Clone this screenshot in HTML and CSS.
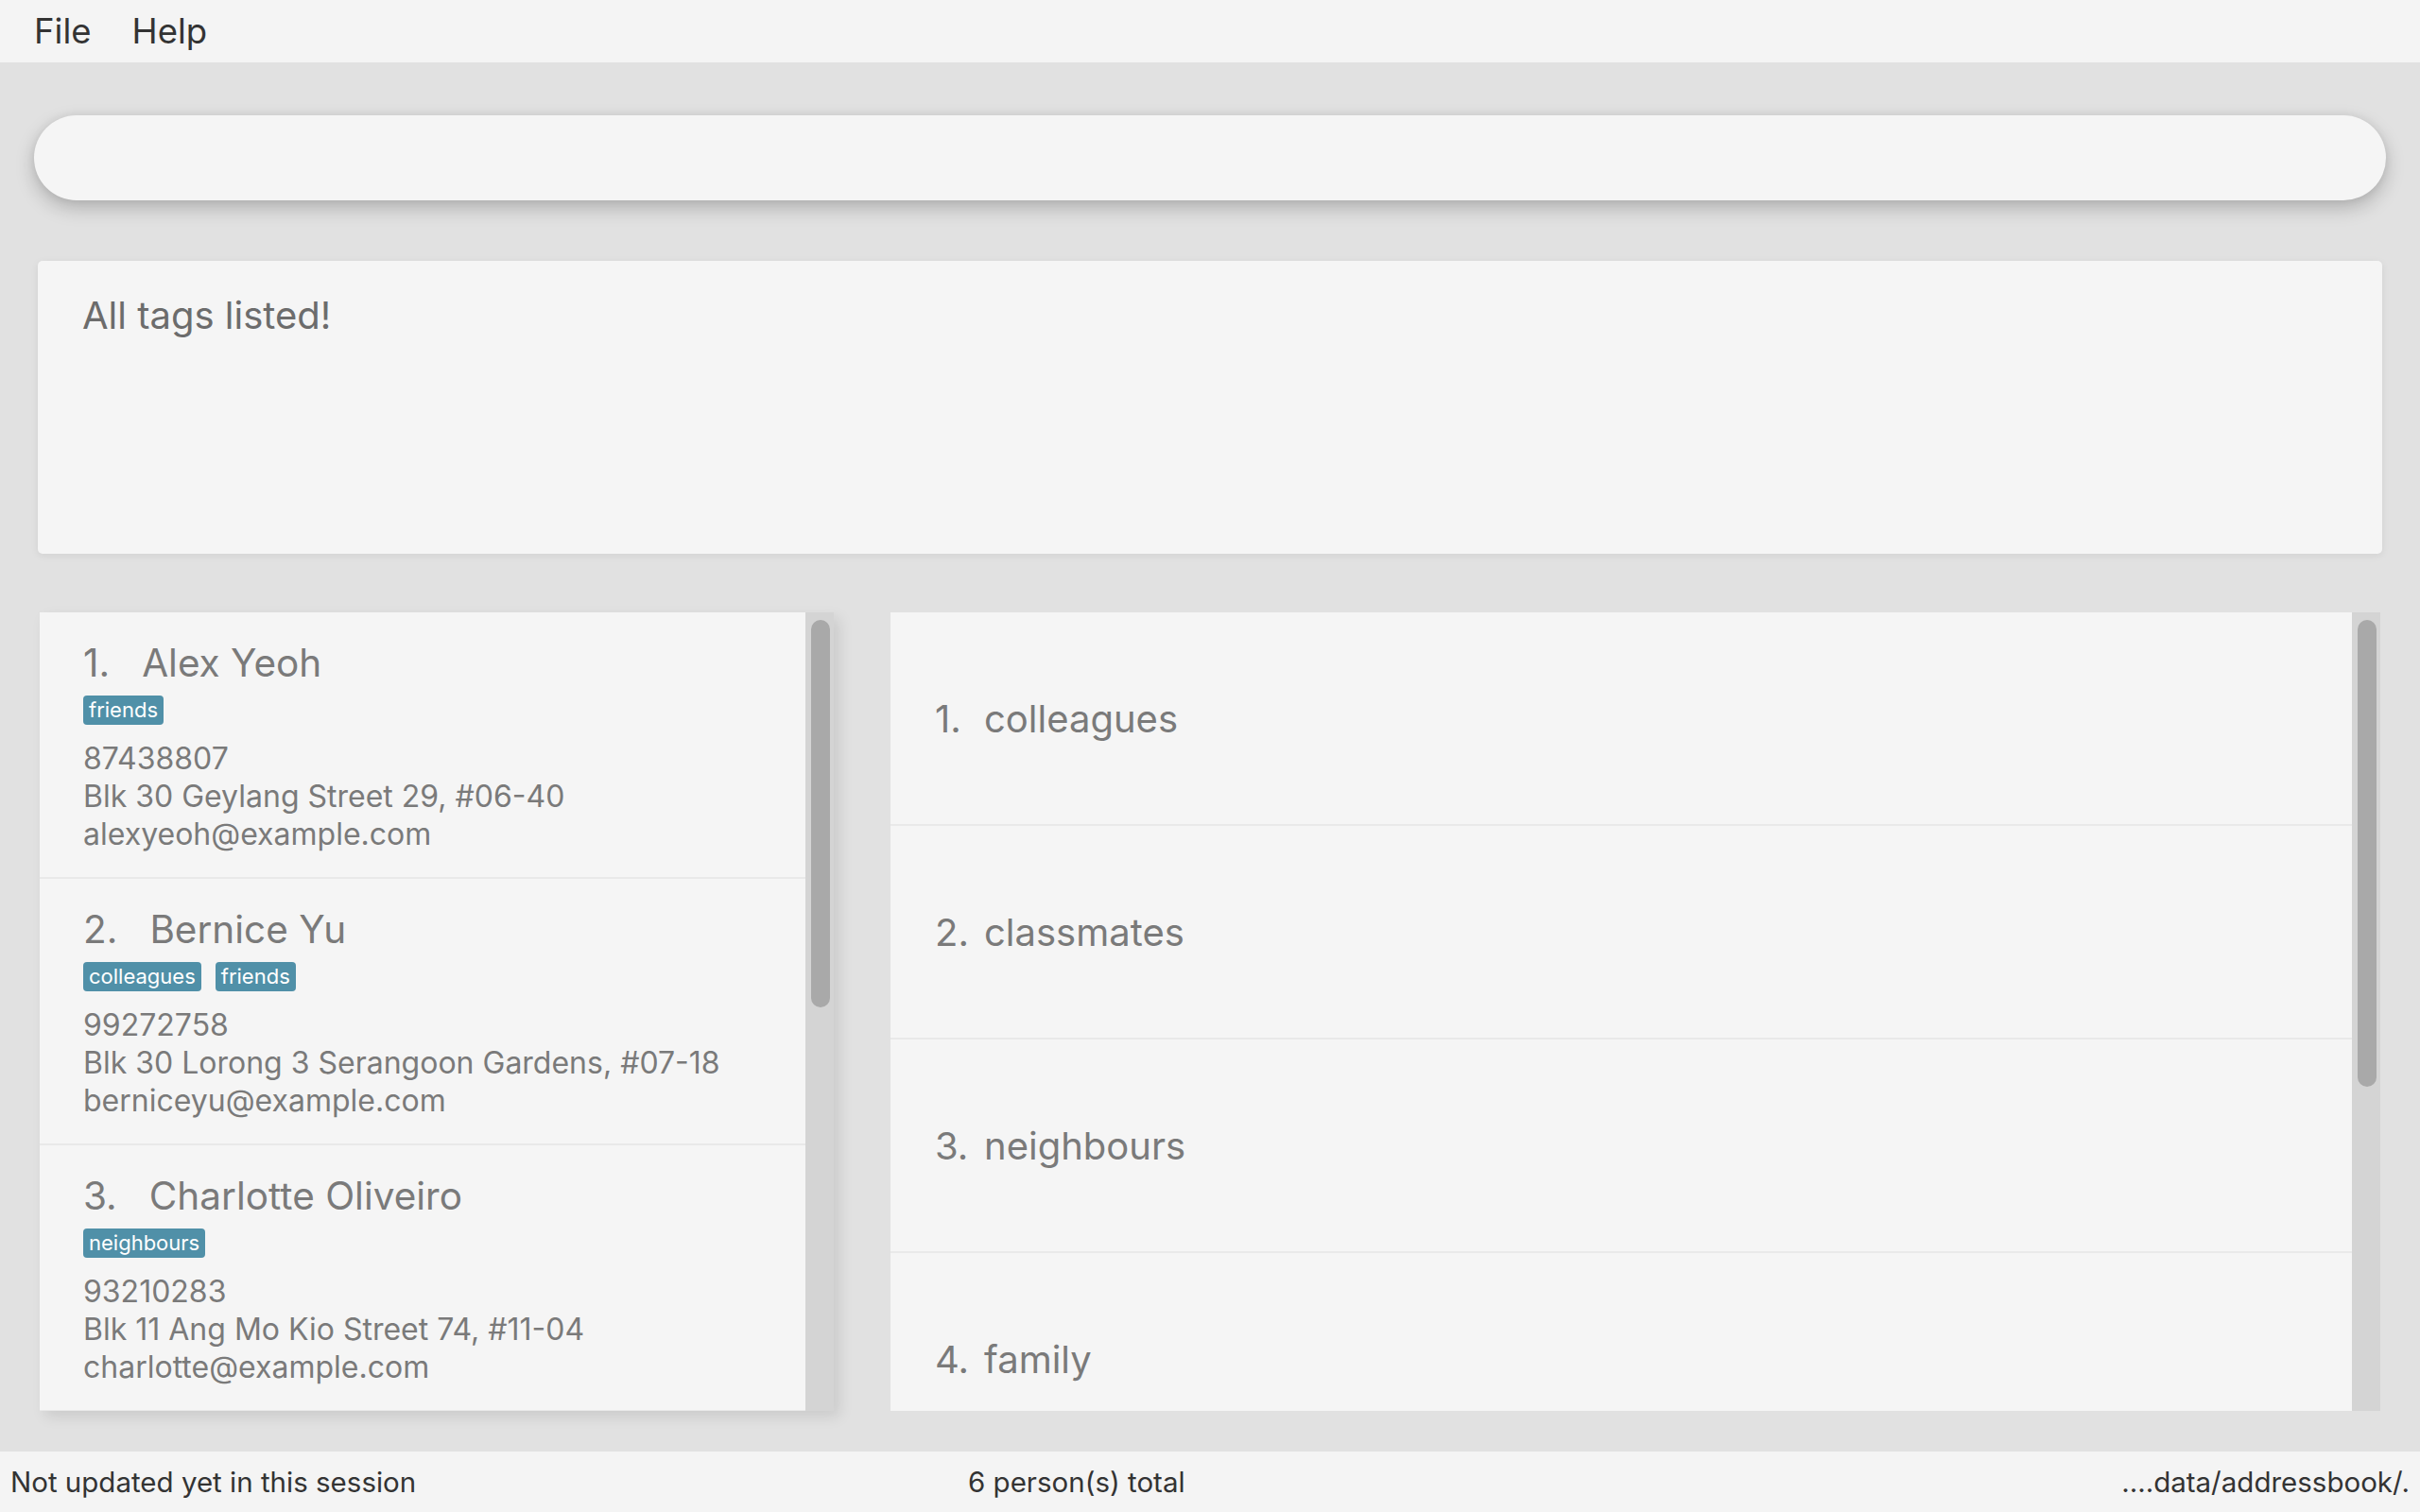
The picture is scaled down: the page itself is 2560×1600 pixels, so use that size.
FILE: index.html
```html
<!DOCTYPE html>
<html>
<head>
<meta charset="utf-8">
<link rel="stylesheet" href="styles.css">
</head>
<body>
<div class="app">
  <div class="menubar">
    <span class="menu-item">File</span>
    <span class="menu-item">Help</span>
  </div>
  <div class="command-box"></div>
  <div class="result-box">All tags listed!</div>
  <div class="panels">
    <div class="person-panel">
      <div class="person-list">
        <div class="card">
          <div class="name"><span class="idx">1.</span>Alex Yeoh</div>
          <div class="tags"><span class="tag">friends</span></div>
          <div class="detail">87438807</div>
          <div class="detail">Blk 30 Geylang Street 29, #06-40</div>
          <div class="detail">alexyeoh@example.com</div>
        </div>
        <div class="card">
          <div class="name"><span class="idx">2.</span>Bernice Yu</div>
          <div class="tags"><span class="tag">colleagues</span><span class="tag">friends</span></div>
          <div class="detail">99272758</div>
          <div class="detail">Blk 30 Lorong 3 Serangoon Gardens, #07-18</div>
          <div class="detail">berniceyu@example.com</div>
        </div>
        <div class="card">
          <div class="name"><span class="idx">3.</span>Charlotte Oliveiro</div>
          <div class="tags"><span class="tag">neighbours</span></div>
          <div class="detail">93210283</div>
          <div class="detail">Blk 11 Ang Mo Kio Street 74, #11-04</div>
          <div class="detail">charlotte@example.com</div>
        </div>
      </div>
      <div class="track track-person"><div class="thumb thumb-person"></div></div>
    </div>
    <div class="tag-panel">
      <div class="tag-list">
        <div class="tag-row"><span class="tidx">1.</span>colleagues</div>
        <div class="tag-row"><span class="tidx">2.</span>classmates</div>
        <div class="tag-row"><span class="tidx">3.</span>neighbours</div>
        <div class="tag-row"><span class="tidx">4.</span>family</div>
      </div>
      <div class="track track-tag"><div class="thumb thumb-tag"></div></div>
    </div>
  </div>
  <div class="statusbar">
    <span class="status-left">Not updated yet in this session</span>
    <span class="status-mid">6 person(s) total</span>
    <span class="status-right">....data/addressbook/.</span>
  </div>
</div>
</body>
</html>
```

FILE: styles.css
```css
* { box-sizing: border-box; }
html, body { margin: 0; padding: 0; }
body {
  width: 2560px;
  height: 1600px;
  overflow: hidden;
  background: #e1e1e1;
  font-family: "Inter", "Liberation Sans", sans-serif;
}
.app {
  display: flex;
  flex-direction: column;
  width: 2560px;
  height: 1600px;
}
.menubar {
  height: 66px;
  flex: none;
  background: #f4f4f4;
  display: flex;
  align-items: center;
  padding-left: 36px;
  gap: 43px;
  font-size: 36.5px;
  color: #333;
}
.command-box {
  flex: none;
  margin: 56px 0 0 36px;
  width: 2488px;
  height: 90px;
  border-radius: 45px;
  background: #f5f5f5;
  box-shadow: 0 8px 20px rgba(0,0,0,0.22), 0 0 10px rgba(0,0,0,0.06);
}
.result-box {
  flex: none;
  margin: 64px 0 0 40px;
  width: 2480px;
  height: 310px;
  border-radius: 5px;
  background: #f5f5f5;
  box-shadow: 0 2px 8px rgba(0,0,0,0.07);
  padding: 33px 0 0 47px;
  font-size: 40px;
  color: #6c6c6c;
}
.panels {
  flex: none;
  margin-top: 62px;
  height: 845px;
  display: flex;
}
.person-panel {
  margin-left: 42px;
  width: 840px;
  display: flex;
  box-shadow: 6px 6px 14px rgba(0,0,0,0.10);
}
.person-list {
  width: 810px;
  background: #f5f5f5;
  overflow: hidden;
}
.card {
  height: 282px;
  border-bottom: 2px solid #e9e9e9;
  padding: 30px 0 0 46px;
  color: #7a7a7a;
}
.name {
  font-size: 40.5px;
  line-height: 48px;
  display: flex;
}
.idx { margin-right: 34px; }
.tags {
  display: flex;
  gap: 15px;
  margin-top: 10px;
  margin-bottom: 16px;
}
.tag {
  background: #5090a8;
  color: #fff;
  font-size: 22px;
  line-height: 31px;
  height: 31px;
  padding: 0 6px;
  border-radius: 4px;
}
.detail {
  font-size: 32px;
  line-height: 40px;
}
.track {
  width: 30px;
  background: #d4d4d4;
  padding: 8px 0 0 6px;
}
.thumb {
  width: 20px;
  background: #a9a9a9;
  border-radius: 10px;
}
.thumb-person { height: 410px; }
.thumb-tag { height: 494px; }
.tag-panel {
  margin-left: 60px;
  width: 1576px;
  display: flex;
}
.tag-list {
  width: 1546px;
  background: #f5f5f5;
  overflow: hidden;
}
.tag-row {
  height: 226px;
  flex: none;
  border-bottom: 2px solid #e9e9e9;
  display: flex;
  align-items: center;
  padding-left: 47px;
  font-size: 40px;
  color: #7a7a7a;
}
.tidx { width: 52px; }
.statusbar {
  flex: none;
  margin-top: 43px;
  height: 64px;
  background: #f4f4f4;
  display: grid;
  grid-template-columns: 1013px 1fr auto;
  align-items: center;
  font-size: 29.5px;
  color: #333;
  padding: 0 11px;
}
```
